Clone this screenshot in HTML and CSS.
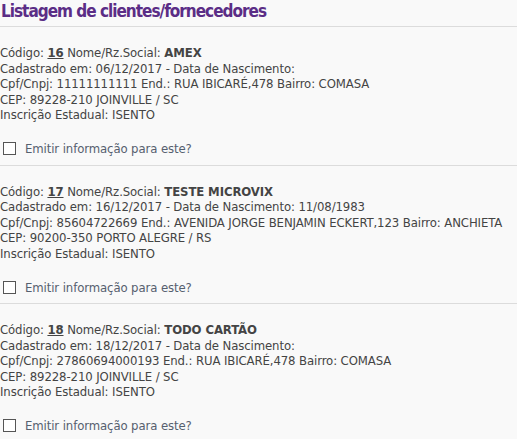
FILE: index.html
```html
<!DOCTYPE html>
<html lang="pt-BR">
<head>
<meta charset="utf-8">
<title>Listagem de clientes/fornecedores</title>
<link rel="stylesheet" href="styles.css">
</head>
<body>
<h1 class="title">Listagem de clientes/fornecedores</h1>
<div class="list">
  <div class="item">
    <div class="info">
      <div>Código: <b class="code">16</b> Nome/Rz.Social: <b>AMEX</b></div>
      <div>Cadastrado em: 06/12/2017 - Data de Nascimento:</div>
      <div>Cpf/Cnpj: 11111111111 End.: RUA IBICARÉ,478 Bairro: COMASA</div>
      <div>CEP: 89228-210 JOINVILLE / SC</div>
      <div>Inscrição Estadual: ISENTO</div>
    </div>
    <label class="check"><input type="checkbox"><span>Emitir informação para este?</span></label>
  </div>
  <div class="item">
    <div class="info">
      <div>Código: <b class="code">17</b> Nome/Rz.Social: <b>TESTE MICROVIX</b></div>
      <div>Cadastrado em: 16/12/2017 - Data de Nascimento: 11/08/1983</div>
      <div>Cpf/Cnpj: 85604722669 End.: AVENIDA JORGE BENJAMIN ECKERT,123 Bairro: ANCHIETA</div>
      <div>CEP: 90200-350 PORTO ALEGRE / RS</div>
      <div>Inscrição Estadual: ISENTO</div>
    </div>
    <label class="check"><input type="checkbox"><span>Emitir informação para este?</span></label>
  </div>
  <div class="item">
    <div class="info">
      <div>Código: <b class="code">18</b> Nome/Rz.Social: <b>TODO CARTÃO</b></div>
      <div>Cadastrado em: 18/12/2017 - Data de Nascimento:</div>
      <div>Cpf/Cnpj: 27860694000193 End.: RUA IBICARÉ,478 Bairro: COMASA</div>
      <div>CEP: 89228-210 JOINVILLE / SC</div>
      <div>Inscrição Estadual: ISENTO</div>
    </div>
    <label class="check"><input type="checkbox"><span>Emitir informação para este?</span></label>
  </div>
</div>
</body>
</html>
```
FILE: styles.css
```css
html, body {
  margin: 0;
  padding: 0;
  background: #f9f9f9;
}
body {
  font-family: "DejaVu Sans Condensed", "DejaVu Sans", sans-serif;
  font-size: 13px;
  letter-spacing: -0.1px;
  color: #444;
  overflow: hidden;
}
.title {
  margin: 0;
  padding: 1px 0 5px 1px;
  font-family: "DejaVu Sans Condensed", "DejaVu Sans", sans-serif;
  font-size: 17px;
  line-height: 20px;
  font-weight: 700;
  color: #5b2d86;
  letter-spacing: -1px;
  border-bottom: 1px solid #dcdcdc;
}
.item {
  padding: 18px 0 8px 0;
  border-bottom: 1px solid #dcdcdc;
  white-space: nowrap;
}
.info {
  line-height: 15.5px;
}
.code {
  text-decoration: underline;
}
.check {
  display: flex;
  align-items: center;
  gap: 9px;
  margin-top: 18px;
  color: #56606f;
  height: 16px;
}
.check input {
  appearance: none;
  -webkit-appearance: none;
  margin: 0 0 0 3px;
  width: 13px;
  height: 13px;
  border: 1px solid #555;
  background: #fff;
  box-sizing: border-box;
}
```
